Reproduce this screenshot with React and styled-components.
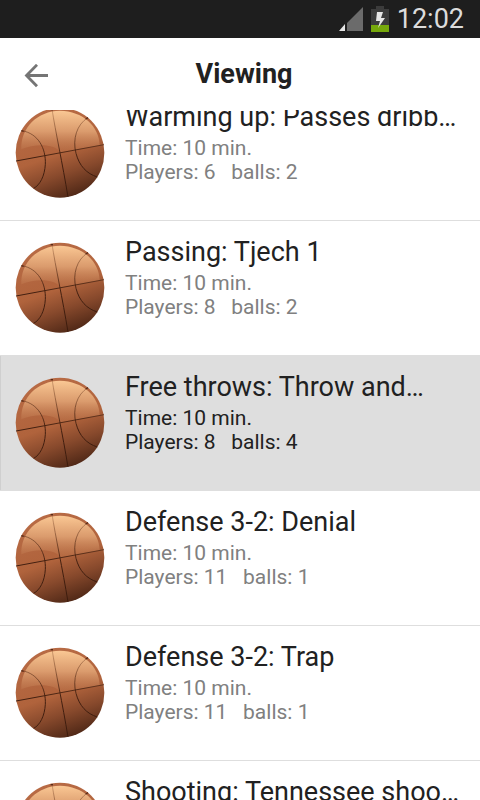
import React, { useLayoutEffect, useRef } from 'react'
import styled, { createGlobalStyle } from 'styled-components'

const exercises = [
  { id: 1, title: 'Warming up: Passes dribb…', time: 10, players: 6, balls: 2 },
  { id: 2, title: 'Passing: Tjech 1', time: 10, players: 8, balls: 2 },
  { id: 3, title: 'Free throws: Throw and…', time: 10, players: 8, balls: 4 },
  { id: 4, title: 'Defense 3-2: Denial', time: 10, players: 11, balls: 1 },
  { id: 5, title: 'Defense 3-2: Trap', time: 10, players: 11, balls: 1 },
  { id: 6, title: 'Shooting: Tennessee shoo…', time: 10, players: 8, balls: 2 },
]

const SELECTED_ID = 3
const START_SCROLL = 24

const SignalIcon = () => (
  <svg width="24" height="24" viewBox="0 0 24 24" aria-hidden="true">
    <path d="M24 0V24H8V16Z" fill="#6b6b6b" />
    <path d="M6 17V24H0Z" fill="#e6e6e6" />
  </svg>
)

const BatteryIcon = () => (
  <svg width="18" height="26" viewBox="0 0 18 26" aria-hidden="true">
    <path d="M5 0H13V3H18V26H0V3H5Z" fill="#3c3c3c" />
    <path d="M0 19H18V26H0Z" fill="#76a80c" />
    <path d="M6 6H12L10 12H14L7 22L9 15H5Z" fill="#e6e6e6" />
  </svg>
)

const ArrowIcon = () => (
  <svg width="24" height="24" viewBox="0 0 24 24" fill="none" stroke="#757575" strokeWidth="2.8" aria-hidden="true">
    <path d="M24 11.500H3M13 0.800L2.500 11.500L13 22.200" />
  </svg>
)

const BallIcon = () => (
  <svg width="90" height="92" viewBox="45 38 270 276" fill="none" aria-hidden="true">
    <defs>
      <linearGradient id="skin" x1="0.35" y1="0" x2="0.7" y2="1">
        <stop offset="0" stopColor="#b86b45" />
        <stop offset="0.5" stopColor="#b0633c" />
        <stop offset="0.72" stopColor="#87492c" />
        <stop offset="1" stopColor="#492414" />
      </linearGradient>
      <linearGradient id="shine" x1="0" y1="0" x2="0" y2="1">
        <stop offset="0" stopColor="#fac894" />
        <stop offset="0.5" stopColor="#dfa172" stopOpacity="0.9" />
        <stop offset="1" stopColor="#c07a50" stopOpacity="0.25" />
      </linearGradient>
      <linearGradient id="seam" x1="0" y1="50" x2="0" y2="190" gradientUnits="userSpaceOnUse">
        <stop offset="0" stopColor="#8a5230" stopOpacity="0.4" />
        <stop offset="1" stopColor="#3a1a0c" />
      </linearGradient>
    </defs>
    <ellipse cx="180" cy="175" rx="133" ry="135" fill="url(#skin)" />
    <path
      d="M64 165C62 100 112 50 180 49C248 50 298 96 299 152C260 160 220 166 182 174C166 150 110 145 64 165Z"
      fill="url(#shine)"
    />
    <g stroke="url(#seam)" strokeWidth="2.8">
      <path d="M48 200L312 151" />
      <path d="M156 44C166 110 188 210 204 308" />
      <path d="M66 109C115 118 138 162 136 210C134 245 120 272 101 282" />
      <path d="M264 70C230 90 217 135 228 177C238 215 260 238 292 248" />
    </g>
    <g stroke="#5a2c17" strokeWidth="4">
      <path d="M152 46H159" />
      <path d="M257 74L264 70" />
      <path d="M64 109L71 111" />
    </g>
  </svg>
)

const App = () => {
  const listRef = useRef(null)

  useLayoutEffect(() => {
    listRef.current.scrollTop = START_SCROLL
  }, [])

  return (
    <Screen>
      <GlobalStyle />
      <StatusBar>
        <SignalIcon />
        <BatteryIcon />
        <Clock>12:02</Clock>
      </StatusBar>
      <Header>
        <BackButton type="button" aria-label="Back">
          <ArrowIcon />
        </BackButton>
        <HeaderTitle>Viewing</HeaderTitle>
      </Header>
      <List ref={listRef}>
        {exercises.map((item) => (
          <Row key={item.id} $selected={item.id === SELECTED_ID}>
            <BallIcon />
            <RowText>
              <RowTitle>{item.title}</RowTitle>
              <Detail>Time: {item.time} min.</Detail>
              <Detail>
                Players: {item.players}{'   '}balls: {item.balls}
              </Detail>
            </RowText>
          </Row>
        ))}
      </List>
    </Screen>
  )
}

export default App

const GlobalStyle = createGlobalStyle`
  * {
    box-sizing: border-box;
  }

  body {
    margin: 0;
    background: #fff;
    color: #212121;
    font-family: Roboto, 'Noto Sans', sans-serif;
  }
`
const Detail = styled.p`
  margin: 0;
  font-size: 21px;
  line-height: 24px;
  white-space: pre;
`
const RowTitle = styled.h2`
  margin: 0 0 3px;
  color: #212121;
  font-size: 27px;
  font-weight: 400;
  line-height: 32px;
  white-space: nowrap;
`
const RowText = styled.div`
  flex: 1;
  min-width: 0;
  margin-top: -6px;
`
const Row = styled.li`
  display: flex;
  align-items: flex-start;
  gap: 20px;
  min-height: 135px;
  padding: 21px 15px 20px;
  background: ${(props) => (props.$selected ? '#dedede' : '#fff')};
  border-bottom: 1px solid #dedede;
  box-shadow: ${(props) => (props.$selected ? 'inset 1px 0 #cfcfcf' : 'none')};
  color: ${(props) => (props.$selected ? '#212121' : '#808080')};

  svg {
    flex: none;
  }
`
const List = styled.ul`
  flex: 1;
  min-height: 0;
  margin: 0;
  padding: 0;
  list-style: none;
  overflow-y: auto;
  scrollbar-width: none;
`
const HeaderTitle = styled.h1`
  margin: 0;
  font-size: 27px;
  font-weight: 700;
  line-height: 28px;
  text-align: center;
`
const BackButton = styled.button`
  display: flex;
  padding: 0;
  border: 0;
  background: none;
  cursor: pointer;
`
const Header = styled.header`
  display: grid;
  grid-template-columns: 24px 1fr 24px;
  align-items: end;
  height: 72px;
  padding: 0 16px 22px 24px;
`
const Clock = styled.span`
  font-size: 27px;
  line-height: 32px;
`
const StatusBar = styled.div`
  display: flex;
  justify-content: flex-end;
  align-items: center;
  gap: 8px;
  height: 38px;
  padding: 0 16px;
  background: #1e1e1e;
  color: #dcdcdc;
`
const Screen = styled.main`
  display: flex;
  flex-direction: column;
  height: 100vh;
`
